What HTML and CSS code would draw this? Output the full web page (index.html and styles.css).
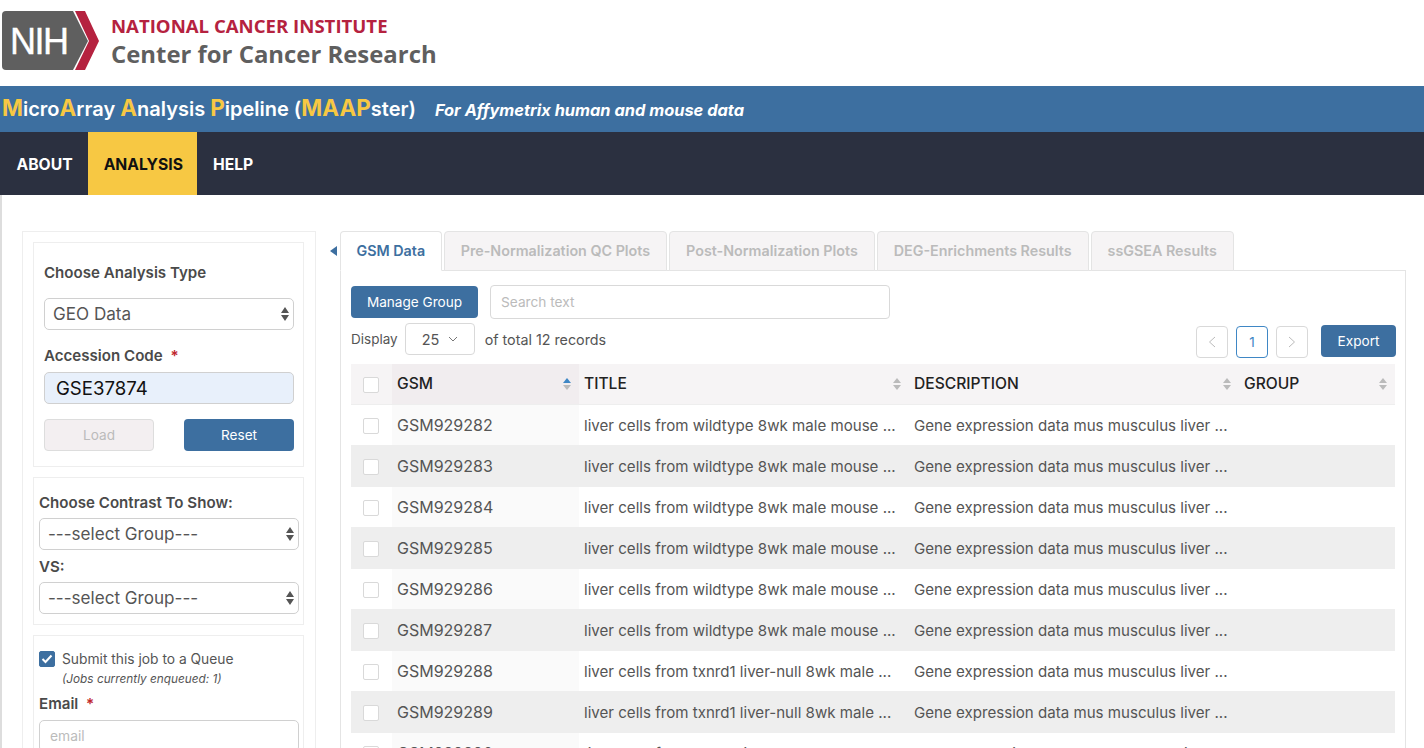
FILE: index.html
```html
<!DOCTYPE html>
<html lang="en">
<head>
    <meta charset="UTF-8">
    <meta name="viewport" content="width=device-width, initial-scale=1.0">
    <title>MAAPster</title>
    <link rel="stylesheet" href="styles.css">
</head>
<body>
    <header class="logo-bar">
        <svg class="nih-mark" width="100" height="62" viewBox="0 0 100 62">
            <path d="M5 1H72L87 31L72 60H5Q1 60 1 56V5Q1 1 5 1Z" fill="#5f5f5f"/>
            <path d="M74 1H84L98 31L84 60H74L88 31Z" fill="#b5223f"/>
            <text x="9" y="44" class="nih-text">NIH</text>
        </svg>
        <div class="logo-text">
            <div class="logo-nci">NATIONAL CANCER INSTITUTE</div>
            <div class="logo-ccr">Center for Cancer Research</div>
        </div>
    </header>

    <div class="title-bar">
        <span class="app-name"><b>M</b>icro<b>A</b>rray <b>A</b>nalysis <b>P</b>ipeline (<b>MAAP</b>ster)</span>
        <span class="app-note">For Affymetrix human and mouse data</span>
    </div>

    <nav class="main-nav">
        <a class="nav-item">ABOUT</a>
        <a class="nav-item active">ANALYSIS</a>
        <a class="nav-item">HELP</a>
    </nav>

    <main class="page">
        <aside class="sidebar">
            <section class="box box-first">
                <label class="field-label first-label">Choose Analysis Type</label>
                <div class="select-wrap">
                    <select class="form-select"><option>GEO Data</option></select>
                    <svg class="updown" width="10" height="16" viewBox="0 0 10 16"><path d="M5 1L9 7H1Z M5 15L1 9H9Z" fill="#555"/></svg>
                </div>
                <label class="field-label code-label">Accession Code <span class="req">*</span></label>
                <input class="form-input filled" type="text" value="GSE37874">
                <div class="btn-row">
                    <button class="btn btn-disabled">Load</button>
                    <button class="btn btn-primary wide">Reset</button>
                </div>
            </section>

            <section class="box box-tight">
                <label class="field-label contrast-label">Choose Contrast To Show:</label>
                <div class="select-wrap">
                    <select class="form-select"><option>---select Group---</option></select>
                    <svg class="updown" width="10" height="16" viewBox="0 0 10 16"><path d="M5 1L9 7H1Z M5 15L1 9H9Z" fill="#555"/></svg>
                </div>
                <label class="field-label vs-label">VS:</label>
                <div class="select-wrap">
                    <select class="form-select"><option>---select Group---</option></select>
                    <svg class="updown" width="10" height="16" viewBox="0 0 10 16"><path d="M5 1L9 7H1Z M5 15L1 9H9Z" fill="#555"/></svg>
                </div>
            </section>

            <section class="box box-tight box-queue">
                <div class="queue-row">
                    <span class="check checked">
                        <svg width="12" height="10" viewBox="0 0 12 10"><path d="M1.5 5L4.5 8L10.5 1.5" fill="none" stroke="#fff" stroke-width="2"/></svg>
                    </span>
                    <span>Submit this job to a Queue</span>
                </div>
                <div class="queue-note">(Jobs currently enqueued: 1)</div>
                <label class="field-label email-label">Email <span class="req">*</span></label>
                <input class="form-input" type="text" placeholder="email">
            </section>
        </aside>

        <svg class="collapse" width="7" height="10" viewBox="0 0 7 10"><path d="M7 0V10L0 5Z" fill="#3d6fa0"/></svg>

        <div class="content">
            <div class="tabs">
                <div class="tab active">GSM Data</div>
                <div class="tab">Pre-Normalization QC Plots</div>
                <div class="tab">Post-Normalization Plots</div>
                <div class="tab">DEG-Enrichments Results</div>
                <div class="tab">ssGSEA Results</div>
            </div>
            <div class="panel">
                <div class="toolbar">
                    <button class="btn btn-primary manage">Manage Group</button>
                    <input class="search" type="text" placeholder="Search text">
                </div>
                <div class="pager-row">
                    <span>Display</span>
                    <div class="page-size">25
                        <svg width="10" height="6" viewBox="0 0 10 6"><path d="M1 1L5 5L9 1" fill="none" stroke="#777"/></svg>
                    </div>
                    <span class="total">of total 12 records</span>
                    <div class="pager">
                        <span class="page-btn"><svg width="8" height="12" viewBox="0 0 8 12"><path d="M7 1L1.5 6L7 11" fill="none" stroke="#bbb"/></svg></span>
                        <span class="page-btn current">1</span>
                        <span class="page-btn"><svg width="8" height="12" viewBox="0 0 8 12"><path d="M1 1L6.5 6L1 11" fill="none" stroke="#bbb"/></svg></span>
                    </div>
                    <button class="btn btn-primary export">Export</button>
                </div>
                <table class="grid">
                    <colgroup>
                        <col class="col-check"><col class="col-gsm"><col class="col-text"><col class="col-text"><col class="col-group">
                    </colgroup>
                    <thead>
                        <tr>
                            <th><span class="check"></span></th>
                            <th class="sorted"><div class="th-in">GSM<svg width="8" height="12" viewBox="0 0 8 12"><path d="M4 0L8 5H0Z" fill="#3f87c5"/><path d="M4 12L0 7H8Z" fill="#bbb"/></svg></div></th>
                            <th><div class="th-in">TITLE<svg width="8" height="12" viewBox="0 0 8 12"><path d="M4 0L8 5H0Z M4 12L0 7H8Z" fill="#bbb"/></svg></div></th>
                            <th><div class="th-in">DESCRIPTION<svg width="8" height="12" viewBox="0 0 8 12"><path d="M4 0L8 5H0Z M4 12L0 7H8Z" fill="#bbb"/></svg></div></th>
                            <th><div class="th-in">GROUP<svg width="8" height="12" viewBox="0 0 8 12"><path d="M4 0L8 5H0Z M4 12L0 7H8Z" fill="#bbb"/></svg></div></th>
                        </tr>
                    </thead>
                    <tbody>
                        <tr><td><span class="check"></span></td><td class="sorted">GSM929282</td><td>liver cells from wildtype 8wk male mouse ...</td><td>Gene expression data mus musculus liver ...</td><td></td></tr>
                        <tr><td><span class="check"></span></td><td class="sorted">GSM929283</td><td>liver cells from wildtype 8wk male mouse ...</td><td>Gene expression data mus musculus liver ...</td><td></td></tr>
                        <tr><td><span class="check"></span></td><td class="sorted">GSM929284</td><td>liver cells from wildtype 8wk male mouse ...</td><td>Gene expression data mus musculus liver ...</td><td></td></tr>
                        <tr><td><span class="check"></span></td><td class="sorted">GSM929285</td><td>liver cells from wildtype 8wk male mouse ...</td><td>Gene expression data mus musculus liver ...</td><td></td></tr>
                        <tr><td><span class="check"></span></td><td class="sorted">GSM929286</td><td>liver cells from wildtype 8wk male mouse ...</td><td>Gene expression data mus musculus liver ...</td><td></td></tr>
                        <tr><td><span class="check"></span></td><td class="sorted">GSM929287</td><td>liver cells from wildtype 8wk male mouse ...</td><td>Gene expression data mus musculus liver ...</td><td></td></tr>
                        <tr><td><span class="check"></span></td><td class="sorted">GSM929288</td><td>liver cells from txnrd1 liver-null 8wk male ...</td><td>Gene expression data mus musculus liver ...</td><td></td></tr>
                        <tr><td><span class="check"></span></td><td class="sorted">GSM929289</td><td>liver cells from txnrd1 liver-null 8wk male ...</td><td>Gene expression data mus musculus liver ...</td><td></td></tr>
                        <tr><td><span class="check"></span></td><td class="sorted">GSM929290</td><td>liver cells from txnrd1 liver-null 8wk male ...</td><td>Gene expression data mus musculus liver ...</td><td></td></tr>
                    </tbody>
                </table>
            </div>
        </div>
    </main>
</body>
</html>
```

FILE: styles.css
```css
html, body {
    margin: 0;
    height: 748px;
    overflow: hidden;
}
body {
    font-family: Inter, "Liberation Sans", sans-serif;
    font-size: 15.1px;
    color: #555;
    background-color: #fff;
}

/* header */
.logo-bar {
    height: 86px;
    display: flex;
    align-items: flex-start;
    box-sizing: border-box;
    padding: 10px 0 0 1px;
}
.nih-text {
    font-family: "Liberation Sans", sans-serif;
    font-size: 36px;
    fill: #fff;
    letter-spacing: -1.5px;
    stroke: #fff;
    stroke-width: 0.4px;
}
.logo-text {
    margin-left: 10px;
    font-family: "Open Sans", sans-serif;
    font-weight: 700;
    white-space: nowrap;
}
.logo-nci {
    color: #b5223f;
    font-size: 18.6px;
    line-height: 20px;
    margin-top: 6px;
}
.logo-ccr {
    color: #5f5f5f;
    font-size: 23.9px;
    line-height: 30px;
    margin-top: 3px;
}
.title-bar {
    height: 46px;
    background-color: #3d6fa0;
    color: #fff;
    display: flex;
    align-items: center;
    padding-left: 2px;
    font-weight: 600;
    white-space: nowrap;
}
.app-name {
    font-size: 20px;
    margin-bottom: 4px;
}
.app-name b {
    color: #f7c843;
    font-size: 22.5px;
    font-weight: 700;
}
.app-note {
    margin: 2px 0 0 19px;
    font-size: 16.4px;
    font-style: italic;
    font-weight: 700;
}
.main-nav {
    height: 63px;
    background-color: #2b3040;
    display: flex;
    padding-left: 1px;
}
.nav-item {
    padding: 0 15.5px;
    line-height: 65px;
    font-size: 15.7px;
    font-weight: 700;
    color: #fff;
}
.nav-item.active {
    padding-right: 14.5px;
    background-color: #f7c843;
    color: #111;
}

/* page */
.page {
    display: flex;
    align-items: flex-start;
    height: 553px;
    padding: 36px 0 0 20px;
    box-sizing: border-box;
    border-left: 2px solid #ddd;
}
.sidebar {
    width: 294px;
    height: 600px;
    box-sizing: border-box;
    border: 1px solid #eee;
    padding: 10px 11px 10px 10px;
    flex-shrink: 0;
}
.box {
    border: 1px solid #eee;
    margin-bottom: 10px;
    padding: 0 9px 0 10px;
}
.box-first {
    height: 225px;
    box-sizing: border-box;
    padding-top: 20px;
}
.box-tight {
    padding: 0 4px 0 5px;
    height: 148px;
    box-sizing: border-box;
}
.box-queue {
    height: 200px;
    padding-top: 15px;
}
.field-label {
    display: block;
    font-size: 15.1px;
    font-weight: 600;
    color: #4a4a4a;
    line-height: 20px;
}
.first-label {
    margin-bottom: 15px;
}
.code-label {
    margin: 16px 0 6px;
}
.contrast-label {
    margin: 15px 0 5px;
}
.vs-label {
    margin: 7px 0 5px;
}
.email-label {
    margin: 8px 0 6px;
}
.req {
    color: #c0272d;
    margin-left: 4px;
}
.select-wrap {
    position: relative;
}
.form-select, .form-input {
    display: block;
    width: 100%;
    height: 32px;
    box-sizing: border-box;
    border: 1px solid #d0d0d0;
    border-radius: 5px;
    background-color: #fff;
    font-family: inherit;
    font-size: 17.1px;
    color: #555;
    padding: 0 8px 2px;
    appearance: none;
}
.updown {
    position: absolute;
    right: 4px;
    top: 8px;
}
.form-input {
    font-size: 13.8px;
    padding: 0 10px;
}
.form-input::placeholder, .search::placeholder {
    color: #bbb;
}
.form-input.filled {
    background-color: #e8f0fb;
    color: #111;
    font-size: 18.6px;
    padding: 0 11px;
}
.btn-row {
    display: flex;
    justify-content: space-between;
    margin-top: 15px;
}
.btn {
    height: 32px;
    border-radius: 4px;
    border: 1px solid transparent;
    font-family: inherit;
    font-size: 13.6px;
    padding: 0;
}
.btn-primary {
    background-color: #3d6fa0;
    color: #fff;
}
.btn-disabled {
    width: 110px;
    background-color: #f3eff1;
    border-color: #ddd;
    color: #bbb;
}
.wide {
    width: 110px;
}
.queue-row {
    display: flex;
    align-items: center;
    gap: 7px;
    font-size: 13.8px;
    color: #555;
}
.check {
    display: inline-flex;
    align-items: center;
    justify-content: center;
    width: 16px;
    height: 16px;
    box-sizing: border-box;
    border: 1px solid #d9d9d9;
    border-radius: 2px;
    background-color: #fff;
    vertical-align: middle;
}
.check.checked {
    background-color: #3d6fa0;
    border-color: #3d6fa0;
}
.queue-note {
    margin: 5px 0 0 23px;
    font-size: 11.8px;
    line-height: 14px;
    font-style: italic;
    color: #555;
}

/* right side */
.collapse {
    margin: 15px 3px 0 14px;
    flex-shrink: 0;
}
.content {
    width: 1066px;
    flex-shrink: 0;
}
.tabs {
    display: flex;
    gap: 2px;
    height: 40px;
    margin-bottom: -1px;
    position: relative;
}
.tab {
    height: 40px;
    box-sizing: border-box;
    border: 1px solid #e4e4e4;
    border-radius: 4px 4px 0 0;
    background-color: #f6f4f5;
    color: #bbb;
    font-size: 14.3px;
    font-weight: 600;
    line-height: 38px;
    padding: 0 16px;
}
.tab.active {
    padding: 0 15.5px;
    background-color: #fff;
    border-bottom-color: #fff;
    color: #3d6fa0;
}
.panel {
    border: 1px solid #e4e4e4;
    height: 600px;
    padding: 14px 10px 0;
    box-sizing: border-box;
}
.toolbar {
    display: flex;
    gap: 12px;
    align-items: center;
}
.manage {
    width: 127px;
    height: 32px;
}
.search {
    width: 400px;
    height: 34px;
    box-sizing: border-box;
    border: 1px solid #d9d9d9;
    border-radius: 4px;
    padding: 0 10px;
    font-family: inherit;
    font-size: 13.7px;
}
.pager-row {
    display: flex;
    align-items: center;
    height: 32px;
    margin: 4px -1px 9px 0;
    font-size: 13.5px;
    white-space: nowrap;
}
.page-size {
    display: flex;
    align-items: center;
    justify-content: space-between;
    width: 70px;
    height: 32px;
    box-sizing: border-box;
    border: 1px solid #d9d9d9;
    border-radius: 4px;
    padding: 0 16px;
    margin: 0 10px 0 7px;
    font-size: 14.5px;
}
.total {
    font-size: 14.3px;
}
.pager {
    display: flex;
    gap: 8px;
    margin-left: auto;
    margin-top: 6px;
}
.page-btn {
    display: flex;
    align-items: center;
    justify-content: center;
    width: 32px;
    height: 32px;
    box-sizing: border-box;
    border: 1px solid #d9d9d9;
    border-radius: 4px;
}
.page-btn.current {
    border-color: #3f87c5;
    color: #3f87c5;
}
.export {
    width: 75px;
    margin-left: 13px;
    margin-top: 4px;
}
.grid {
    width: 1044px;
    border-collapse: collapse;
    table-layout: fixed;
}
.col-check { width: 41px; }
.col-gsm { width: 187px; }
.col-text { width: 330px; }
.col-group { width: 156px; }
.grid th, .grid td {
    height: 41px;
    box-sizing: border-box;
    padding: 0 5px;
    border-bottom: 1px solid #eee;
    text-align: left;
    white-space: nowrap;
}
.grid th {
    height: 40px;
    background-color: #f6f4f5;
    color: #222;
    font-weight: 500;
    font-size: 15.6px;
}
.grid td {
    padding-top: 1px;
}
.grid th:first-child, .grid td:first-child {
    padding-left: 12px;
}
.grid th.sorted {
    background-color: #f1edef;
}
.grid td.sorted {
    background-color: #fafafa;
    font-size: 16px;
}
.grid tbody tr:nth-child(even) td {
    background-color: #eeeeee;
}
.th-in {
    display: flex;
    justify-content: space-between;
    align-items: center;
    padding-right: 3px;
}
```
